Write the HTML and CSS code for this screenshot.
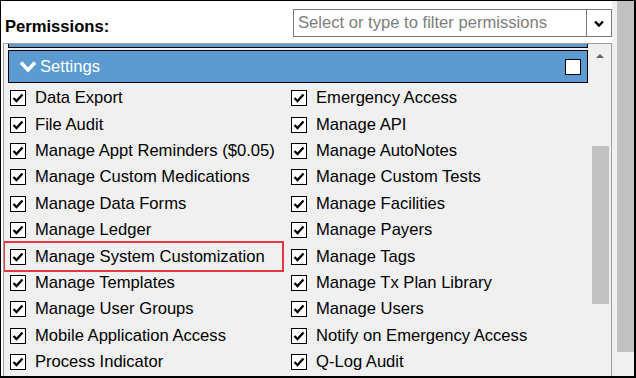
FILE: index.html
```html
<!DOCTYPE html>
<html lang="en">
<head>
    <meta charset="UTF-8">
    <meta name="viewport" content="width=device-width, initial-scale=1.0">
    <title>Permissions</title>
    <link rel="stylesheet" href="styles.css">
</head>
<body>
    <div class="page">
        <div class="perm-header">
            <label class="perm-label">Permissions:</label>
            <div class="perm-filter">
                <span class="perm-filter-text">Select or type to filter permissions</span>
                <span class="perm-filter-btn">
                    <svg width="12" height="8" viewBox="0 0 12 8"><polyline points="2,1.5 6,5.5 10,1.5" fill="none" stroke="#000" stroke-width="2.4"/></svg>
                </span>
            </div>
        </div>
        <div class="perm-panel">
            <div class="perm-list">
                <div class="group-sliver"></div>
                <div class="group-head">
                    <svg class="group-chevron" width="18" height="13" viewBox="0 0 18 13"><polyline points="2,2.5 9,10 16,2.5" fill="none" stroke="#fff" stroke-width="3.4"/></svg>
                    <span class="group-title">Settings</span>
                    <span class="group-check"></span>
                </div>
                <div class="perm-grid">
                    <div class="perm-item"><span class="cb"></span>Data Export</div>
                    <div class="perm-item"><span class="cb"></span>Emergency Access</div>
                    <div class="perm-item"><span class="cb"></span>File Audit</div>
                    <div class="perm-item"><span class="cb"></span>Manage API</div>
                    <div class="perm-item"><span class="cb"></span>Manage Appt Reminders ($0.05)</div>
                    <div class="perm-item"><span class="cb"></span>Manage AutoNotes</div>
                    <div class="perm-item"><span class="cb"></span>Manage Custom Medications</div>
                    <div class="perm-item"><span class="cb"></span>Manage Custom Tests</div>
                    <div class="perm-item"><span class="cb"></span>Manage Data Forms</div>
                    <div class="perm-item"><span class="cb"></span>Manage Facilities</div>
                    <div class="perm-item"><span class="cb"></span>Manage Ledger</div>
                    <div class="perm-item"><span class="cb"></span>Manage Payers</div>
                    <div class="perm-item highlight"><span class="cb"></span>Manage System Customization</div>
                    <div class="perm-item"><span class="cb"></span>Manage Tags</div>
                    <div class="perm-item"><span class="cb"></span>Manage Templates</div>
                    <div class="perm-item"><span class="cb"></span>Manage Tx Plan Library</div>
                    <div class="perm-item"><span class="cb"></span>Manage User Groups</div>
                    <div class="perm-item"><span class="cb"></span>Manage Users</div>
                    <div class="perm-item"><span class="cb"></span>Mobile Application Access</div>
                    <div class="perm-item"><span class="cb"></span>Notify on Emergency Access</div>
                    <div class="perm-item"><span class="cb"></span>Process Indicator</div>
                    <div class="perm-item"><span class="cb"></span>Q-Log Audit</div>
                </div>
            </div>
            <div class="inner-scroll">
                <span class="scroll-up"></span>
                <span class="inner-thumb"></span>
            </div>
        </div>
    </div>
    <div class="page-scroll">
        <span class="page-thumb"></span>
    </div>
</body>
</html>
```

FILE: styles.css
```css
html {
    margin: 0;
    padding: 0;
}
body {
    margin: 0;
    width: 636px;
    height: 378px;
    box-sizing: border-box;
    border-style: solid;
    border-color: #000;
    border-width: 1px 2px 2px 1px;
    background-color: #fff;
    font-family: Arial, "Liberation Sans", sans-serif;
    font-size: 16.6px;
    color: #000;
    display: flex;
    overflow: hidden;
}
.page {
    width: 611px;
    display: flex;
    flex-direction: column;
}

/* header: label + filter box */
.perm-header {
    height: 42px;
    display: flex;
    align-items: flex-start;
    padding-left: 4px;
}
.perm-label {
    font-weight: bold;
    line-height: 19px;
    margin-top: 16px;
}
.perm-filter {
    margin-left: auto;
    margin-top: 8px;
    width: 319px;
    height: 28px;
    box-sizing: border-box;
    border: 1px solid #7a7a7a;
    background-color: #fff;
    display: flex;
}
.perm-filter-text {
    flex: 1;
    color: #7d7d7d;
    line-height: 26px;
    padding-left: 4px;
    border-right: 1px solid #7a7a7a;
}
.perm-filter-btn {
    width: 24px;
    display: flex;
    align-items: center;
    justify-content: center;
    padding-top: 1px;
}

/* scrolled permissions panel */
.perm-panel {
    flex: 1;
    margin-left: 2px;
    border: 1px solid #a0a0a0;
    border-bottom: none;
    background-color: #f0f0f0;
    display: flex;
    overflow: hidden;
}
.perm-list {
    flex: 1;
    overflow: hidden;
}
.group-sliver {
    height: 3px;
    margin: 0 3px 0 4px;
    background-color: #5b9bd1;
    border: 1px solid #000;
    border-top: none;
}
.group-head {
    height: 31px;
    margin: 2px 3px 0 4px;
    background-color: #5b9bd1;
    border: 1px solid #000;
    display: flex;
    align-items: center;
    color: #fff;
}
.group-chevron {
    margin-left: 10px;
    margin-right: 3px;
}
.group-title {
    line-height: 31px;
}
.group-check {
    margin-left: auto;
    margin-right: 6px;
    width: 14px;
    height: 14px;
    background-color: #fff;
    border: 1px solid #000;
}
.perm-grid {
    display: grid;
    grid-template-columns: 281px 1fr;
    grid-auto-rows: 26.4px;
    padding: 2px 0 0 6px;
}
.perm-item {
    position: relative;
    display: flex;
    align-items: center;
    gap: 9px;
    white-space: nowrap;
    color: #000;
}
.cb {
    width: 14px;
    height: 14px;
    flex: none;
    border: 1px solid #000;
    background: #fff url("data:image/svg+xml;utf8,<svg xmlns='http://www.w3.org/2000/svg' width='14' height='14'><polyline points='2.5,7 5.5,10 11.5,3.5' fill='none' stroke='black' stroke-width='2.3'/></svg>") no-repeat center;
}
.perm-item.highlight::after {
    content: "";
    position: absolute;
    left: -7px;
    top: -2px;
    width: 277px;
    height: 27px;
    border: 2px solid #e5393f;
}

/* inner list scrollbar */
.inner-scroll {
    width: 20px;
    position: relative;
}
.scroll-up {
    position: absolute;
    left: 5px;
    top: 10px;
    width: 0;
    height: 0;
    border-left: 4px solid transparent;
    border-right: 4px solid transparent;
    border-bottom: 4px solid #606060;
}
.inner-thumb {
    position: absolute;
    left: 1px;
    top: 102px;
    width: 17px;
    height: 158px;
    background-color: #c1c1c1;
}

/* page scrollbar */
.page-scroll {
    width: 22px;
    background-color: #f0f0f0;
    position: relative;
}
.page-thumb {
    position: absolute;
    left: 5px;
    top: 0;
    width: 17px;
    height: 351px;
    background-color: #c1c1c1;
}
```
